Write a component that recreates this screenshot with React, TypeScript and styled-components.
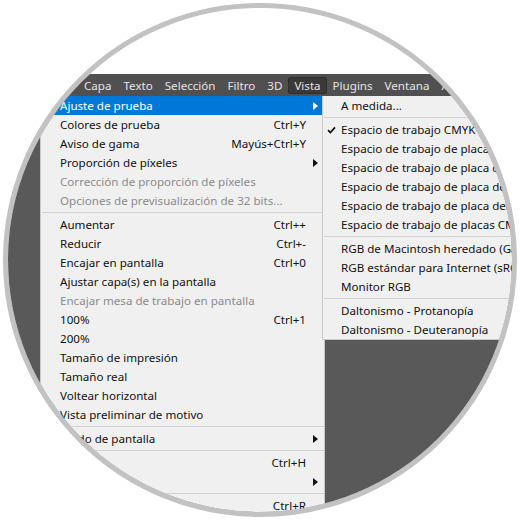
import React from 'react';
import styled, { createGlobalStyle } from 'styled-components';

const GlobalStyle = createGlobalStyle`
  html, body {
    margin: 0;
    padding: 0;
    background: #ffffff;
  }
  body {
    font-family: "Noto Sans", "Open Sans", sans-serif;
  }
`;

const Page = styled.div`
  width: 520px;
  height: 520px;
  background: #ffffff;
  overflow: hidden;
`;

const Circle = styled.div`
  width: 504px;
  height: 504px;
  margin: 3px;
  border: 5px solid #c2c2c2;
  border-radius: 50%;
  overflow: hidden;
  background: #ffffff;
`;

const Screen = styled.div`
  display: flex;
  flex-direction: column;
  height: 100%;
  padding-top: 66px;
  box-sizing: border-box;
`;

const MenuBar = styled.div`
  display: flex;
  align-items: center;
  height: 22px;
  padding-left: 70px;
  background: #505050;
  flex-shrink: 0;
`;

const BarItem = styled.div<{ $active?: boolean }>`
  height: 15px;
  line-height: 15px;
  padding: 0 5px;
  font-size: 11.6px;
  color: #e4e4e4;
  white-space: nowrap;
  border: 1px solid ${(p) => (p.$active ? '#2e2e2e' : 'transparent')};
  border-radius: 2px;
  background: ${(p) => (p.$active ? '#393939' : 'transparent')};
`;

const Workspace = styled.div`
  flex: 1;
  display: flex;
  align-items: flex-start;
  padding-left: 32px;
  background: #595959;
`;

const Menu = styled.div`
  width: 285px;
  flex-shrink: 0;
  background: #f0f0f0;
  border: 1px solid #c9c9c9;
  border-top: none;
  box-sizing: border-box;
`;

const SubMenu = styled.div`
  width: 300px;
  flex-shrink: 0;
  margin-left: -3px;
  background: #f0f0f0;
  border: 1px solid #c9c9c9;
  border-top: none;
  box-sizing: border-box;
`;

const Row = styled.div<{ $active?: boolean; $disabled?: boolean }>`
  display: flex;
  align-items: center;
  height: 19px;
  padding: 0 6px 0 19px;
  font-size: 11.6px;
  white-space: nowrap;
  background: ${(p) => (p.$active ? '#0078d7' : 'transparent')};
  color: ${(p) => (p.$active ? '#ffffff' : p.$disabled ? '#8b8b8b' : '#111111')};
`;

const SubRow = styled(Row)`
  padding-left: 4px;
`;

const Label = styled.span`
  flex: 1;
`;

const Shortcut = styled.span`
  text-align: right;
`;

const ArrowSlot = styled.span`
  width: 12px;
  flex-shrink: 0;
  display: flex;
  justify-content: flex-end;
`;

const Arrow = styled.span<{ $light?: boolean }>`
  width: 0;
  height: 0;
  border-top: 4px solid transparent;
  border-bottom: 4px solid transparent;
  border-left: 5px solid ${(p) => (p.$light ? '#ffffff' : '#111111')};
`;

const CheckSlot = styled.span`
  width: 14px;
  flex-shrink: 0;
  display: flex;
  align-items: center;
`;

const Separator = styled.div`
  height: 1px;
  margin: 2px 0 2px 1px;
  background: #d2d2d2;
`;

type Item =
  | { sep: true }
  | {
      sep?: false;
      label: string;
      shortcut?: string;
      sub?: boolean;
      disabled?: boolean;
      active?: boolean;
      checked?: boolean;
    };

const barItems = ['Capa', 'Texto', 'Selección', 'Filtro', '3D', 'Vista', 'Plugins', 'Ventana', 'Ayuda'];

const viewMenu: Item[] = [
  { label: 'Ajuste de prueba', sub: true, active: true },
  { label: 'Colores de prueba', shortcut: 'Ctrl+Y' },
  { label: 'Aviso de gama', shortcut: 'Mayús+Ctrl+Y' },
  { label: 'Proporción de píxeles', sub: true },
  { label: 'Corrección de proporción de píxeles', disabled: true },
  { label: 'Opciones de previsualización de 32 bits...', disabled: true },
  { sep: true },
  { label: 'Aumentar', shortcut: 'Ctrl++' },
  { label: 'Reducir', shortcut: 'Ctrl+-' },
  { label: 'Encajar en pantalla', shortcut: 'Ctrl+0' },
  { label: 'Ajustar capa(s) en la pantalla' },
  { label: 'Encajar mesa de trabajo en pantalla', disabled: true },
  { label: '100%', shortcut: 'Ctrl+1' },
  { label: '200%' },
  { label: 'Tamaño de impresión' },
  { label: 'Tamaño real' },
  { label: 'Voltear horizontal' },
  { label: 'Vista preliminar de motivo' },
  { sep: true },
  { label: 'Modo de pantalla', sub: true },
  { sep: true },
  { label: 'Extras', shortcut: 'Ctrl+H' },
  { label: 'Mostrar', sub: true },
  { sep: true },
  { label: 'Reglas', shortcut: 'Ctrl+R' },
];

const proofMenu: Item[] = [
  { label: 'A medida...' },
  { sep: true },
  { label: 'Espacio de trabajo CMYK', checked: true },
  { label: 'Espacio de trabajo de placa cian' },
  { label: 'Espacio de trabajo de placa de magenta' },
  { label: 'Espacio de trabajo de placa de amarillo' },
  { label: 'Espacio de trabajo de placa del negro' },
  { label: 'Espacio de trabajo de placas CMY' },
  { sep: true },
  { label: 'RGB de Macintosh heredado (Gamma 1.8)' },
  { label: 'RGB estándar para Internet (sRGB)' },
  { label: 'Monitor RGB' },
  { sep: true },
  { label: 'Daltonismo - Protanopía' },
  { label: 'Daltonismo - Deuteranopía' },
];

const Check = () => (
  <svg width="9" height="8" viewBox="0 0 9 8">
    <path d="M1 4.2 L3.4 6.6 L8 1.4" fill="none" stroke="#111" strokeWidth="1.7" />
  </svg>
);

const App: React.FC = () => (
  <Page>
    <GlobalStyle />
    <Circle>
      <Screen>
        <MenuBar>
          {barItems.map((name) => (
            <BarItem key={name} $active={name === 'Vista'}>
              {name}
            </BarItem>
          ))}
        </MenuBar>
        <Workspace>
          <Menu>
            {viewMenu.map((item, i) =>
              item.sep ? (
                <Separator key={i} />
              ) : (
                <Row key={i} $active={item.active} $disabled={item.disabled}>
                  <Label>{item.label}</Label>
                  {item.shortcut && <Shortcut>{item.shortcut}</Shortcut>}
                  <ArrowSlot>{item.sub && <Arrow $light={item.active} />}</ArrowSlot>
                </Row>
              )
            )}
          </Menu>
          <SubMenu>
            {proofMenu.map((item, i) =>
              item.sep ? (
                <Separator key={i} />
              ) : (
                <SubRow key={i}>
                  <CheckSlot>{item.checked && <Check />}</CheckSlot>
                  <Label>{item.label}</Label>
                </SubRow>
              )
            )}
          </SubMenu>
        </Workspace>
      </Screen>
    </Circle>
  </Page>
);

export default App;
